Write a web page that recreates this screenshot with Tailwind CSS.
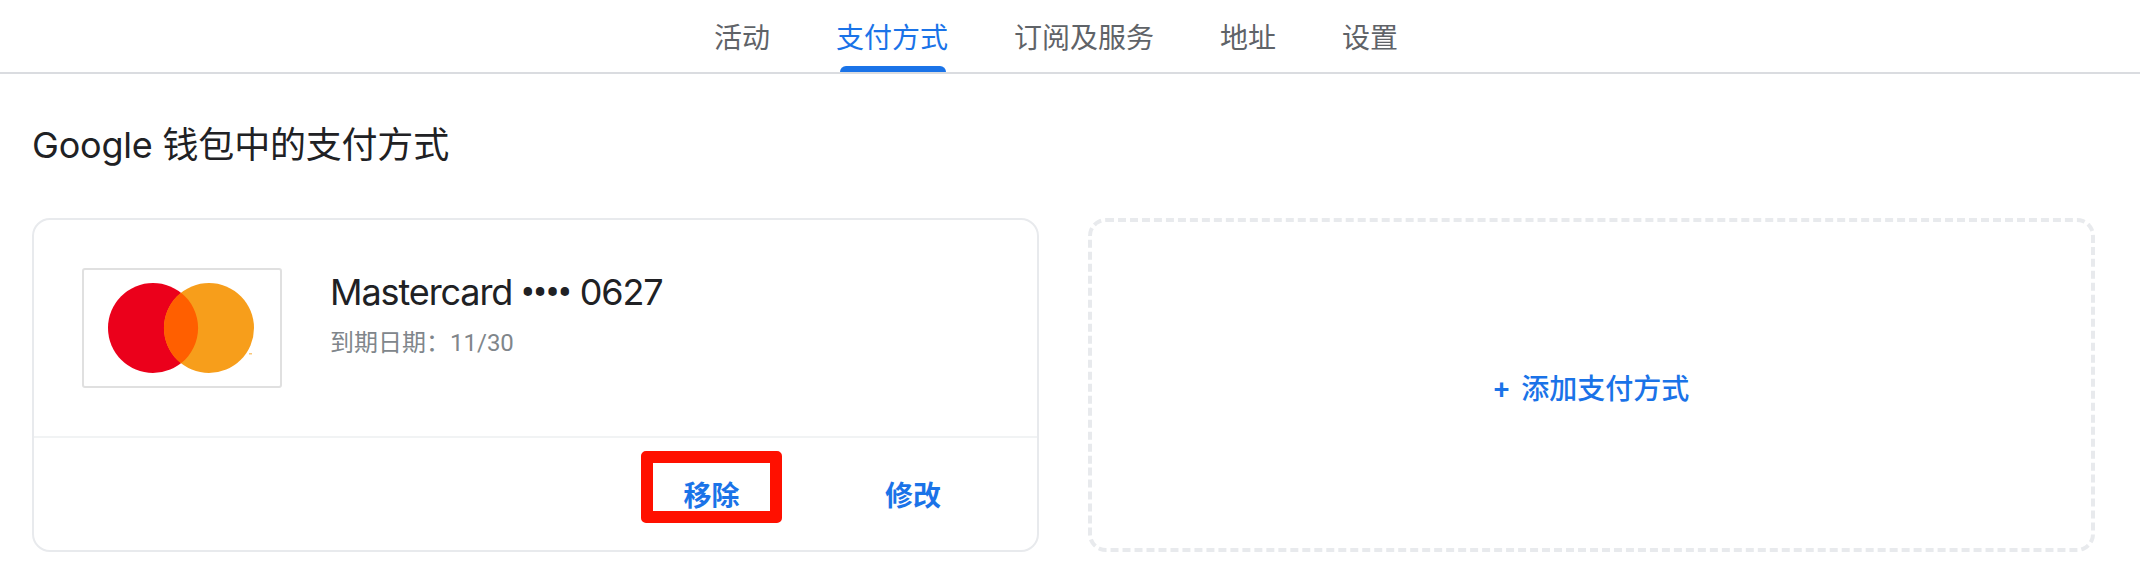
<!DOCTYPE html>
<html lang="zh-CN">
<head>
    <meta charset="UTF-8">
    <title>支付方式</title>
    <script src="https://cdn.jsdelivr.net/npm/@tailwindcss/browser@4"></script>
</head>
<body class="bg-white font-['Roboto','Noto_Sans_CJK_SC',sans-serif]">
    <!-- 顶部标签 -->
    <nav class="flex h-[74px] pl-[681px] border-b-2 border-[#dadce0] text-[28px] text-[#5f6368]">
        <a class="px-[33px] pt-[21px] leading-[36px]">活动</a>
        <a class="relative px-[33px] pt-[21px] leading-[36px] text-[#1a73e8]">
            支付方式
            <span class="absolute left-[37px] bottom-0 w-[106px] h-[6px] rounded-t-[6px] bg-[#1a73e8]"></span>
        </a>
        <a class="px-[33px] pt-[21px] leading-[36px]">订阅及服务</a>
        <a class="px-[33px] pt-[21px] leading-[36px]">地址</a>
        <a class="px-[33px] pt-[21px] leading-[36px]">设置</a>
    </nav>

    <main class="pl-[32px] pr-[45px]">
        <h1 class="mt-[49px] h-[44px] text-[36px] leading-[44px] text-[#202124] font-normal font-['Inter','Noto_Sans_CJK_SC',sans-serif] tracking-[-0.2px]">Google 钱包中的支付方式</h1>

        <div class="mt-[51px] grid grid-cols-2 gap-[49px]">
            <!-- 卡片 -->
            <section class="h-[334px] rounded-[18px] border-2 border-[#e8eaed] flex flex-col">
                <div class="h-[218px] border-b-2 border-[#f1f3f4] flex pl-[48px] pt-[48px]">
                    <div class="w-[200px] h-[120px] rounded-[3px] border-2 border-[#e0e0e0] shrink-0">
                        <svg width="196" height="116" viewBox="0 0 196 116">
                            <circle cx="69" cy="58" r="45" fill="#eb001b"/>
                            <circle cx="125" cy="58" r="45" fill="#f79e1b"/>
                            <path d="M97 22.7a45 45 0 0 1 0 70.6a45 45 0 0 1 0-70.6z" fill="#ff5f00"/>
                            <rect x="165" y="83" width="3" height="1.5" fill="#f9c77a"/>
                        </svg>
                    </div>
                    <div class="ml-[48px]">
                        <div class="mt-[2px] text-[36px] leading-[44px] text-[#202124] font-['Inter','Noto_Sans_CJK_SC',sans-serif] tracking-[-1.1px] whitespace-nowrap">Mastercard <span class="font-['Roboto'] font-bold tracking-[-0.6px]">••••</span> 0627</div>
                        <div class="mt-[12px] text-[24px] leading-[32px] text-[#80868b]">到期日期：11/30</div>
                    </div>
                </div>
                <div class="flex-1 flex items-start justify-end text-[28px] font-bold text-[#1a73e8]">
                    <button class="mt-[13px] w-[141px] h-[72px] rounded-[5px] border-[12px] border-[#ff1000] text-center leading-[48px] pt-[10px]">移除</button>
                    <button class="mt-[13px] ml-[103px] mr-[96px] h-[72px] leading-[72px] pt-[10px]">修改</button>
                </div>
            </section>

            <!-- 添加 -->
            <button class="h-[334px] rounded-[18px] border-4 border-dashed border-[#e8eaed] flex items-center justify-center text-[28px] font-medium text-[#1a73e8] pt-[10px]">
                <span class="mr-[12px]">+</span>添加支付方式
            </button>
        </div>
    </main>
</body>
</html>
